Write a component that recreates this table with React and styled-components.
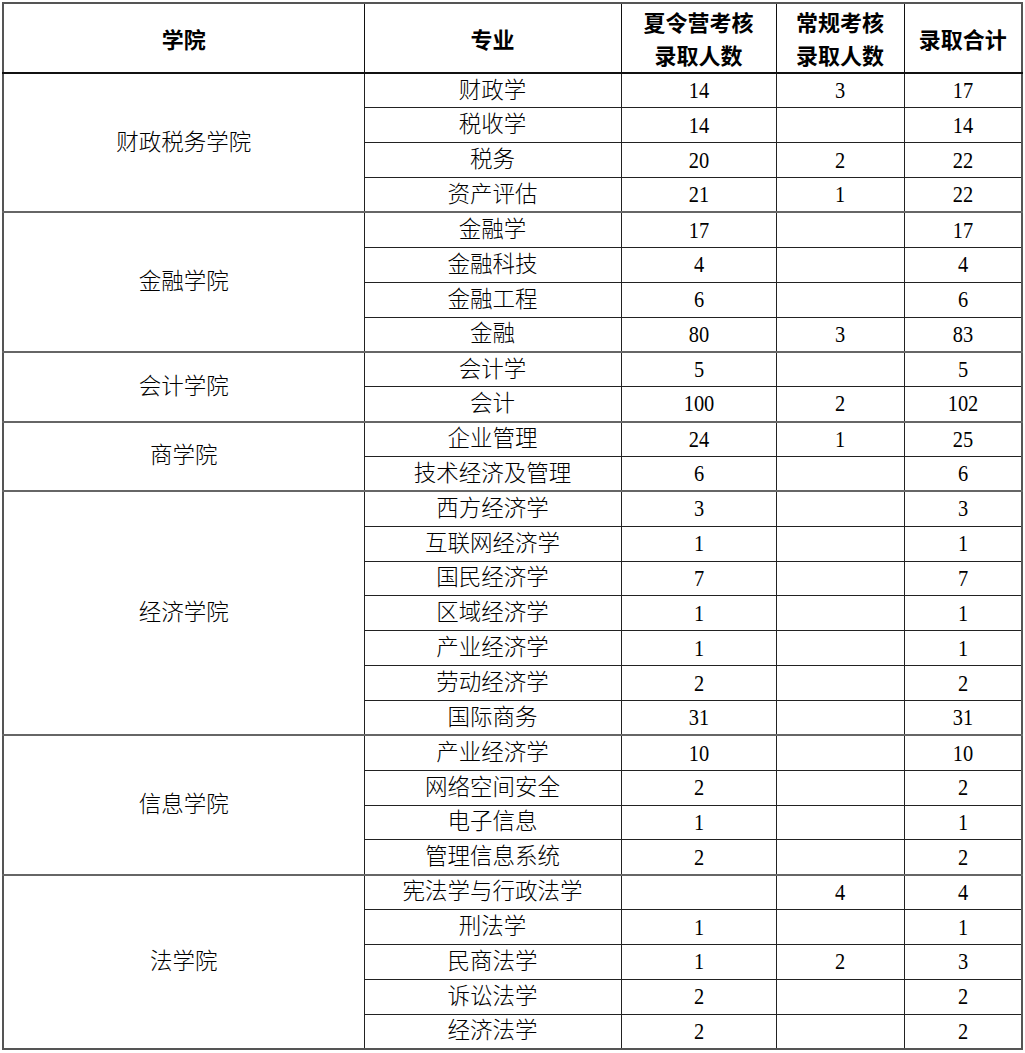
import React from 'react'
import styled, { createGlobalStyle } from 'styled-components'

const GlobalStyle = createGlobalStyle`
  html, body {
    margin: 0;
    padding: 0;
    background: #fff;
  }
`

const groups = [
  {
    name: '财政税务学院',
    rows: [
      ['财政学', '14', '3', '17'],
      ['税收学', '14', '', '14'],
      ['税务', '20', '2', '22'],
      ['资产评估', '21', '1', '22'],
    ],
  },
  {
    name: '金融学院',
    rows: [
      ['金融学', '17', '', '17'],
      ['金融科技', '4', '', '4'],
      ['金融工程', '6', '', '6'],
      ['金融', '80', '3', '83'],
    ],
  },
  {
    name: '会计学院',
    rows: [
      ['会计学', '5', '', '5'],
      ['会计', '100', '2', '102'],
    ],
  },
  {
    name: '商学院',
    rows: [
      ['企业管理', '24', '1', '25'],
      ['技术经济及管理', '6', '', '6'],
    ],
  },
  {
    name: '经济学院',
    rows: [
      ['西方经济学', '3', '', '3'],
      ['互联网经济学', '1', '', '1'],
      ['国民经济学', '7', '', '7'],
      ['区域经济学', '1', '', '1'],
      ['产业经济学', '1', '', '1'],
      ['劳动经济学', '2', '', '2'],
      ['国际商务', '31', '', '31'],
    ],
  },
  {
    name: '信息学院',
    rows: [
      ['产业经济学', '10', '', '10'],
      ['网络空间安全', '2', '', '2'],
      ['电子信息', '1', '', '1'],
      ['管理信息系统', '2', '', '2'],
    ],
  },
  {
    name: '法学院',
    rows: [
      ['宪法学与行政法学', '', '4', '4'],
      ['刑法学', '1', '', '1'],
      ['民商法学', '1', '2', '3'],
      ['诉讼法学', '2', '', '2'],
      ['经济法学', '2', '', '2'],
    ],
  },
]

const Page = styled.div`
  padding: 2px 0 0 2px;
`

const Table = styled.table`
  width: 1019px;
  table-layout: fixed;
  border-collapse: collapse;
  border: 2px solid #555;
  color: #000;
`

const HeadCell = styled.th`
  height: 68px;
  padding: 0;
  border: 1px solid #111;
  border-bottom: 2px solid #111;
  font-family: "Noto Sans CJK SC", sans-serif;
  font-weight: 700;
  font-size: 22px;
  line-height: 33px;
  text-align: center;
  vertical-align: middle;
`

const Row = styled.tr`
  height: 34.86px;
`

const Cell = styled.td`
  padding: 0;
  border: 1px solid #222;
  border-top: ${(p) => (p.$groupStart ? '2px solid #666' : '1px solid #444')};
  font-family: "Liberation Serif", "Noto Sans CJK SC", serif;
  font-weight: 300;
  font-size: 22.5px;
  line-height: 24px;
  text-align: center;
  vertical-align: middle;
`

const Number = styled.span`
  display: inline-block;
  font-size: 24px;
  transform: scaleX(0.85);
`

export default function App() {
  return (
    <Page>
      <GlobalStyle />
      <Table>
        <colgroup>
          <col style={{ width: 361 }} />
          <col style={{ width: 257 }} />
          <col style={{ width: 155 }} />
          <col style={{ width: 128 }} />
          <col style={{ width: 118 }} />
        </colgroup>
        <thead>
          <tr>
            <HeadCell>学院</HeadCell>
            <HeadCell>专业</HeadCell>
            <HeadCell>
              夏令营考核
              <br />
              录取人数
            </HeadCell>
            <HeadCell>
              常规考核
              <br />
              录取人数
            </HeadCell>
            <HeadCell>录取合计</HeadCell>
          </tr>
        </thead>
        <tbody>
          {groups.map((g, gi) =>
            g.rows.map((r, ri) => (
              <Row key={`${gi}-${ri}`}>
                {ri === 0 && (
                  <Cell rowSpan={g.rows.length} $groupStart={gi > 0}>
                    {g.name}
                  </Cell>
                )}
                <Cell $groupStart={gi > 0 && ri === 0}>{r[0]}</Cell>
                <Cell $groupStart={gi > 0 && ri === 0}>
                  <Number>{r[1]}</Number>
                </Cell>
                <Cell $groupStart={gi > 0 && ri === 0}>
                  <Number>{r[2]}</Number>
                </Cell>
                <Cell $groupStart={gi > 0 && ri === 0}>
                  <Number>{r[3]}</Number>
                </Cell>
              </Row>
            ))
          )}
        </tbody>
      </Table>
    </Page>
  )
}
